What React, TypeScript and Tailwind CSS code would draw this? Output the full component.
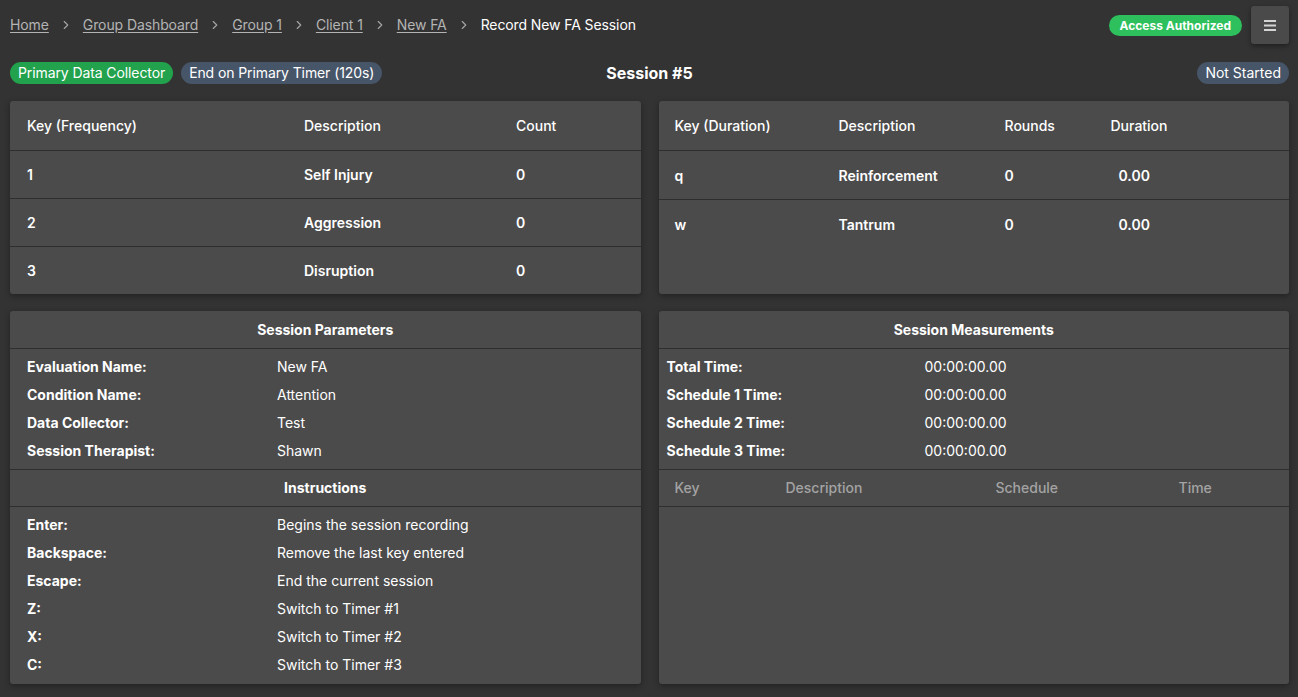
const crumbs = ["Home", "Group Dashboard", "Group 1", "Client 1", "New FA"];

const frequencyRows = [
  { key: "1", description: "Self Injury", count: "0" },
  { key: "2", description: "Aggression", count: "0" },
  { key: "3", description: "Disruption", count: "0" },
];

const durationRows = [
  { key: "q", description: "Reinforcement", rounds: "0", duration: "0.00" },
  { key: "w", description: "Tantrum", rounds: "0", duration: "0.00" },
];

const parameters = [
  ["Evaluation Name:", "New FA"],
  ["Condition Name:", "Attention"],
  ["Data Collector:", "Test"],
  ["Session Therapist:", "Shawn"],
];

const instructions = [
  ["Enter:", "Begins the session recording"],
  ["Backspace:", "Remove the last key entered"],
  ["Escape:", "End the current session"],
  ["Z:", "Switch to Timer #1"],
  ["X:", "Switch to Timer #2"],
  ["C:", "Switch to Timer #3"],
];

const measurements = [
  ["Total Time:", "00:00:00.00"],
  ["Schedule 1 Time:", "00:00:00.00"],
  ["Schedule 2 Time:", "00:00:00.00"],
  ["Schedule 3 Time:", "00:00:00.00"],
];

function Chevron() {
  return (
    <svg width="14" height="14" viewBox="0 0 24 24" fill="none" stroke="#a3a3a3" strokeWidth="2" strokeLinecap="round" strokeLinejoin="round" className="mx-[10px]">
      <path d="m9 18 6-6-6-6" />
    </svg>
  );
}

function Panel({ children, className = "" }: { children: React.ReactNode; className?: string }) {
  return (
    <div className={`bg-[#4b4b4b] rounded-[3px] shadow-[0_2px_6px_rgba(0,0,0,0.35)] overflow-hidden ${className}`}>
      {children}
    </div>
  );
}

function SectionTitle({ title, first = false }: { title: string; first?: boolean }) {
  return (
    <div className={`${first ? "pt-[9px] pb-2" : "py-2"} text-center text-sm leading-5 font-bold text-white border-b border-[#2e2e2e]`}>
      {title}
    </div>
  );
}

export default function App() {
  return (
    <div
      className="min-h-[697px] bg-[#333333] text-white pl-2.5 pr-[9px] pt-1.5 pb-[13px] flex flex-col"
      style={{ fontFamily: "Inter, 'Noto Sans', sans-serif" }}
    >
      {/* breadcrumb */}
      <div className="flex items-center h-[38px]">
        <nav className="flex items-center text-sm leading-5 tracking-[-0.1px]">
          {crumbs.map((c) => (
            <span key={c} className="flex items-center">
              <a href="#" className="text-[#b4b4b4] underline underline-offset-2">
                {c}
              </a>
              <Chevron />
            </span>
          ))}
          <span className="text-white">Record New FA Session</span>
        </nav>
        <div className="ml-auto flex items-center gap-[9px]">
          <span className="bg-[#2ec05c] text-white text-xs font-bold rounded-full px-[11px] py-[3px] leading-[15px]">
            Access Authorized
          </span>
          <button className="w-[38px] h-[38px] bg-[#4a4a4a] rounded-[3px] shadow-[0_2px_5px_rgba(0,0,0,0.4)] flex items-center justify-center">
            <svg width="12" height="11" viewBox="0 0 12 11">
              <rect x="0" y="0" width="12" height="2" fill="#d4d4d4" />
              <rect x="0" y="4.5" width="12" height="2" fill="#d4d4d4" />
              <rect x="0" y="9" width="12" height="2" fill="#d4d4d4" />
            </svg>
          </button>
        </div>
      </div>

      {/* status row */}
      <div className="mt-[17px] grid grid-cols-[1fr_auto_1fr] items-center h-[23px]">
        <div className="flex items-center gap-2 text-sm tracking-[-0.1px]">
          <span className="bg-[#22a24c] rounded-full px-2 py-px leading-5">Primary Data Collector</span>
          <span className="bg-[#475569] rounded-full px-2 py-px leading-5">End on Primary Timer (120s)</span>
        </div>
        <div className="text-base font-bold">Session #5</div>
        <div className="flex justify-end text-sm">
          <span className="bg-[#475569] rounded-full px-2 py-px leading-5">Not Started</span>
        </div>
      </div>

      {/* key tables */}
      <div className="mt-[17px] grid grid-cols-2 gap-[18px]">
        <Panel>
          <div className="grid grid-cols-[277px_212px_1fr] pl-[17px] pr-4 text-sm font-medium leading-5 py-[14.5px] border-b border-[#2e2e2e]">
            <span>Key (Frequency)</span>
            <span>Description</span>
            <span>Count</span>
          </div>
          {frequencyRows.map((r, i) => (
            <div
              key={r.key}
              className={`grid grid-cols-[277px_212px_1fr] pl-[17px] pr-4 text-sm font-semibold leading-5 py-[13.5px] ${i < frequencyRows.length - 1 ? "border-b border-[#2e2e2e]" : ""}`}
            >
              <span>{r.key}</span>
              <span>{r.description}</span>
              <span>{r.count}</span>
            </div>
          ))}
        </Panel>
        <Panel>
          <div className="grid grid-cols-[164px_166px_106px_1fr] pl-4 pr-4 text-sm font-medium leading-5 py-[14.5px] border-b border-[#2e2e2e]">
            <span>Key (Duration)</span>
            <span>Description</span>
            <span>Rounds</span>
            <span>Duration</span>
          </div>
          {durationRows.map((r, i) => (
            <div
              key={r.key}
              className={`grid grid-cols-[164px_166px_106px_1fr] px-4 text-sm font-semibold leading-5 pt-[14.5px] pb-[13.5px] ${i < durationRows.length - 1 ? "border-b border-[#2e2e2e]" : ""}`}
            >
              <span>{r.key}</span>
              <span>{r.description}</span>
              <span>{r.rounds}</span>
              <span className="pl-2">{r.duration}</span>
            </div>
          ))}
        </Panel>
      </div>

      {/* parameters + measurements */}
      <div className="mt-[17px] flex-1 grid grid-cols-2 gap-[18px]">
        <Panel className="flex flex-col">
          <SectionTitle title="Session Parameters" first />
          <div className="pl-[17px] pr-4 py-1 border-b border-[#2e2e2e]">
            {parameters.map(([label, value]) => (
              <div key={label} className="grid grid-cols-[250px_1fr] text-sm leading-5 py-1">
                <span className="font-bold">{label}</span>
                <span>{value}</span>
              </div>
            ))}
          </div>
          <SectionTitle title="Instructions" />
          <div className="pl-[17px] pr-4 py-1">
            {instructions.map(([label, value]) => (
              <div key={label} className="grid grid-cols-[250px_1fr] text-sm leading-5 py-1">
                <span className="font-bold">{label}</span>
                <span>{value}</span>
              </div>
            ))}
          </div>
        </Panel>
        <Panel className="flex flex-col">
          <SectionTitle title="Session Measurements" first />
          <div className="px-2 py-1 border-b border-[#2e2e2e]">
            {measurements.map(([label, value]) => (
              <div key={label} className="grid grid-cols-[258px_1fr] text-sm leading-5 py-1">
                <span className="font-bold">{label}</span>
                <span>{value}</span>
              </div>
            ))}
          </div>
          <div className="grid grid-cols-[111px_210px_183px_1fr] px-4 py-2 text-sm leading-5 font-medium text-[#a3a3a3] border-b border-[#2e2e2e]">
            <span>Key</span>
            <span>Description</span>
            <span>Schedule</span>
            <span>Time</span>
          </div>
          <div className="flex-1" />
        </Panel>
      </div>
    </div>
  );
}
